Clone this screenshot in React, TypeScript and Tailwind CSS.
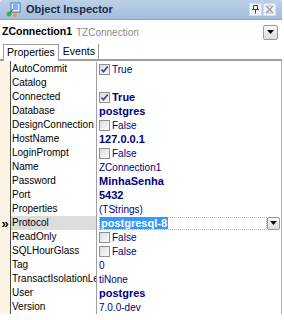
import React from 'react';

type Row = {
  name: string;
  value?: string;
  check?: boolean;
  bold?: boolean;
  selected?: boolean;
};

const rows: Row[] = [
  { name: 'AutoCommit', value: 'True', check: true },
  { name: 'Catalog' },
  { name: 'Connected', value: 'True', check: true, bold: true },
  { name: 'Database', value: 'postgres', bold: true },
  { name: 'DesignConnection', value: 'False', check: false },
  { name: 'HostName', value: '127.0.0.1', bold: true },
  { name: 'LoginPrompt', value: 'False', check: false },
  { name: 'Name', value: 'ZConnection1' },
  { name: 'Password', value: 'MinhaSenha', bold: true },
  { name: 'Port', value: '5432', bold: true },
  { name: 'Properties', value: '(TStrings)' },
  { name: 'Protocol', value: 'postgresql-8', bold: true, selected: true },
  { name: 'ReadOnly', value: 'False', check: false },
  { name: 'SQLHourGlass', value: 'False', check: false },
  { name: 'Tag', value: '0' },
  { name: 'TransactIsolationLevel', value: 'tiNone' },
  { name: 'User', value: 'postgres', bold: true },
  { name: 'Version', value: '7.0.0-dev' },
];

const DropBtn = ({ className = '' }: { className?: string }) => (
  <div
    className={`flex items-center justify-center border border-[#9a9a9a] bg-gradient-to-b from-[#fafafa] to-[#dcdcdc] rounded-[2px] shrink-0 ${className}`}
  >
    <svg width="7" height="4" viewBox="0 0 7 4">
      <path d="M0 0h7L3.5 4z" fill="#000" />
    </svg>
  </div>
);

const CheckBox = ({ checked }: { checked: boolean }) => (
  <div className="w-[11px] h-[11px] border border-[#8e8f8f] bg-gradient-to-br from-[#dcdcdc] to-[#fbfbfb] flex items-center justify-center shrink-0">
    {checked && (
      <svg width="9" height="9" viewBox="0 0 9 9">
        <path d="M1.5 4.5l2 2.2L7.8 1.5" stroke="#2a4a9e" strokeWidth="1.7" fill="none" />
      </svg>
    )}
  </div>
);

export default function App() {
  return (
    <div
      className="w-[284px] h-[320px] bg-white overflow-hidden relative text-[10px] text-black"
      style={{ fontFamily: '"Liberation Sans", Arial, sans-serif' }}
    >
      {/* title bar */}
      <div className="h-[20px] flex items-center bg-gradient-to-b from-[#bcd0e7] to-[#a4bddb] border-b border-[#8ea6c4] rounded-t-[2px] pl-[5px] pr-[6px] w-[282px]">
        <svg width="16" height="16" viewBox="0 0 16 16" className="shrink-0">
          <rect x="6" y="1" width="9" height="9" fill="#e8f3ff" stroke="#3b78c4" />
          <path d="M8 3h5M8 5h5M8 7h5" stroke="#2e6bb8" />
          <circle cx="4" cy="12" r="2.5" fill="#4bb34b" />
          <path d="M4 12L8 7" stroke="#3a7a3a" strokeWidth="1.2" />
          <circle cx="10" cy="13" r="2" fill="#e3a32a" />
        </svg>
        <span className="ml-[5px] font-bold text-[11px] text-[#1a2a44]">Object Inspector</span>
        <div className="ml-auto flex gap-[1px]">
          <div className="w-[13px] h-[13px] bg-[#eef3f9] border border-[#d5dfeb] flex items-center justify-center">
            <svg width="9" height="9" viewBox="0 0 9 9">
              <path d="M2.5 0.5h4v4h-4zM1 4.5h7M4.5 4.5v4" stroke="#444" fill="none" />
            </svg>
          </div>
          <div className="w-[13px] h-[13px] bg-[#eef3f9] border border-[#d5dfeb] flex items-center justify-center">
            <svg width="9" height="9" viewBox="0 0 9 9">
              <path d="M1 1l7 7M8 1L1 8" stroke="#999" strokeWidth="1.2" />
              <path d="M2 1h5M2 8h5" stroke="#bbb" />
            </svg>
          </div>
        </div>
      </div>

      {/* component selector */}
      <div className="h-[20px] mt-[2px] flex items-center pl-[2px] pr-[4px] w-[282px]">
        <span className="font-bold text-[10.5px]">ZConnection1</span>
        <span className="ml-[4px] text-[#8a8a8a]">TZConnection</span>
        <DropBtn className="ml-auto w-[15px] h-[15px]" />
      </div>

      {/* tabs */}
      <div className="mt-[2px] h-[17px] flex items-end pl-[3px] w-[282px] border-b-[2px] border-[#9c9c9c] relative">
        <div className="h-[17px] px-[3px] border border-b-0 border-[#9c9c9c] bg-white flex items-center -mb-[2px] pb-[1px] text-[10.5px]">
          Properties
        </div>
        <div className="h-[15px] px-[3px] ml-[1px] border-r border-[#9c9c9c] flex items-center text-[10.5px]">Events</div>
      </div>

      {/* grid */}
      <div className="flex w-[282px] border-r border-[#b0b0b0]">
        <div className="w-[11px] bg-[#fbf4e4] border-r border-[#4a4a4a] flex flex-col pt-[1px]">
          {rows.map((r) => (
            <div key={r.name} className="h-[14px] flex items-center justify-center text-[13px] font-bold leading-none">
              {r.selected ? '»' : ''}
            </div>
          ))}
        </div>
        <div className="flex-1 flex flex-col pt-[1px]">
          {rows.map((r) => (
            <div key={r.name} className="h-[14px] flex">
              <div
                className={`w-[86px] shrink-0 pl-[1px] overflow-hidden whitespace-nowrap leading-[14px] border-r border-[#a0a0a0] ${
                  r.selected ? 'bg-[#dcdcdc]' : ''
                }`}
              >
                {r.name}
              </div>
              {r.selected ? (
                <div className="flex-1 flex items-center pl-[2px] pr-[1px]">
                  <div className="flex-1 h-[13px] border border-dotted border-[#b0b0b0] flex items-center">
                    <span className="bg-[#3399ff] text-white font-bold text-[11px] leading-[12px] px-[1px]">{r.value}</span>
                  </div>
                  <DropBtn className="w-[13px] h-[13px]" />
                </div>
              ) : (
                <div className="flex-1 flex items-center pl-[2px] gap-[2px] text-[#000080] whitespace-nowrap">
                  {r.check !== undefined && <CheckBox checked={r.check} />}
                  <span className={r.bold ? 'font-bold text-[11px]' : ''}>{r.value}</span>
                </div>
              )}
            </div>
          ))}
        </div>
      </div>
    </div>
  );
}
